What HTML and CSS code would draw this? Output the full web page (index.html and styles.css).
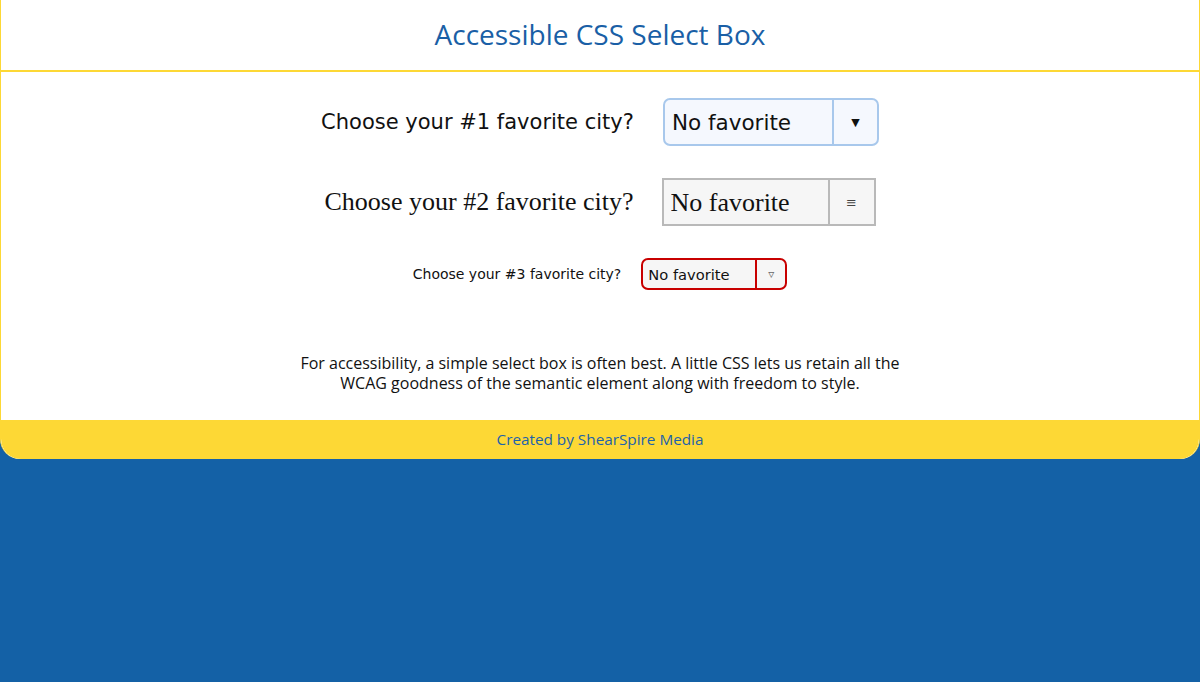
FILE: index.html
```html
<!DOCTYPE html>
<html lang="en">
<head>
<meta charset="utf-8">
<title>Accessible CSS Select Box</title>
<link rel="stylesheet" href="styles.css">
</head>
<body>
<div class="page">
  <header class="masthead">
    <h1 class="title">Accessible CSS Select Box</h1>
  </header>
  <main class="content">
    <div class="row row-1">
      <label class="label label-1" for="city1">Choose your #1 favorite city?</label>
      <div class="pick pick-1">
        <select id="city1" class="pick-select">
          <option>No favorite</option>
          <option>Amsterdam</option>
          <option>Buenos Aires</option>
          <option>Cape Town</option>
        </select>
        <span class="pick-arrow" aria-hidden="true">▼</span>
      </div>
    </div>
    <div class="row row-2">
      <label class="label label-2" for="city2">Choose your #2 favorite city?</label>
      <div class="pick pick-2">
        <select id="city2" class="pick-select">
          <option>No favorite</option>
          <option>Amsterdam</option>
          <option>Buenos Aires</option>
          <option>Cape Town</option>
        </select>
        <span class="pick-arrow" aria-hidden="true">≡</span>
      </div>
    </div>
    <div class="row row-3">
      <label class="label label-3" for="city3">Choose your #3 favorite city?</label>
      <div class="pick pick-3">
        <select id="city3" class="pick-select">
          <option>No favorite</option>
          <option>Amsterdam</option>
          <option>Buenos Aires</option>
          <option>Cape Town</option>
        </select>
        <span class="pick-arrow" aria-hidden="true">▿</span>
      </div>
    </div>
    <p class="note">For accessibility, a simple select box is often best. A little CSS lets us retain all the<br>WCAG goodness of the semantic element along with freedom to style.</p>
  </main>
  <footer class="foot">
    <a class="foot-link" href="#">Created by ShearSpire Media</a>
  </footer>
</div>
</body>
</html>
```
FILE: styles.css
```css
html, body {
  margin: 0;
  padding: 0;
}

body {
  background: #1461a6;
  min-height: 682px;
  font-family: "Open Sans", "DejaVu Sans", sans-serif;
}

.page {
  background: #fff;
  border-left: 1px solid #fdd835;
  border-right: 1px solid #fdd835;
  border-radius: 0 0 20px 20px;
  overflow: hidden;
}

.masthead {
  height: 70px;
  border-bottom: 2px solid #fdd835;
  display: flex;
  align-items: center;
  justify-content: center;
}

.title {
  margin: 0 0 2px;
  font-family: "Open Sans", sans-serif;
  font-weight: 400;
  font-size: 28px;
  color: #1a5fa6;
}

.content {
  padding: 26px 0 0;
  display: flex;
  flex-direction: column;
  align-items: center;
}

.row {
  display: flex;
  align-items: center;
  justify-content: center;
  margin-bottom: 32px;
}

.row-1 { gap: 29px; }
.row-2 { gap: 28px; }
.row-3 { gap: 20px; }

.label-1 {
  font-family: "DejaVu Sans", sans-serif;
  font-size: 21px;
  color: #111;
}

.label-2 {
  font-family: "Liberation Serif", serif;
  font-size: 26px;
  color: #111;
}

.label-3 {
  font-family: "DejaVu Sans", sans-serif;
  font-size: 14px;
  color: #111;
}

.pick {
  display: flex;
  align-items: stretch;
  box-sizing: border-box;
  border-style: solid;
  border-width: 2px;
}

.pick-select {
  appearance: none;
  -webkit-appearance: none;
  border: 0;
  margin: 0;
  outline: none;
  background: transparent;
  color: #111;
  flex: 1;
  min-width: 0;
}

.pick-arrow {
  display: flex;
  align-items: center;
  justify-content: center;
  border-left-style: solid;
  border-left-width: 2px;
}

.pick-1 {
  width: 216px;
  height: 48px;
  border-color: #a8c8ec;
  border-radius: 7px;
  background: #f5f8fe;
}
.pick-1 .pick-select {
  font-family: "DejaVu Sans", sans-serif;
  font-size: 21.5px;
  padding: 0 0 0 7px;
}
.pick-1 .pick-arrow {
  width: 43px;
  border-left-color: #a8c8ec;
  font-size: 11px;
  color: #111;
  font-family: "DejaVu Sans", sans-serif;
}

.pick-2 {
  width: 214px;
  height: 48px;
  border-color: #b9b9b9;
  background: #f6f6f6;
}
.pick-2 .pick-select {
  font-family: "Liberation Serif", serif;
  font-size: 26px;
  padding: 0 0 0 7px;
}
.pick-2 .pick-arrow {
  width: 44px;
  border-left-color: #b9b9b9;
  font-size: 13px;
  color: #444;
  font-family: "DejaVu Sans", sans-serif;
}

.pick-3 {
  width: 146px;
  height: 32px;
  border-color: #c80000;
  border-radius: 7px;
  background: #f6f6f6;
}
.pick-3 .pick-select {
  font-family: "DejaVu Sans", sans-serif;
  font-size: 14.7px;
  padding: 0 0 0 5px;
}
.pick-3 .pick-arrow {
  width: 28px;
  border-left-color: #c80000;
  font-size: 12px;
  color: #666;
  font-family: "DejaVu Sans", sans-serif;
}

.note {
  margin: 31px 0 27px;
  text-align: center;
  font-family: "Open Sans", sans-serif;
  font-size: 16px;
  line-height: 20px;
  color: #111;
}

.foot {
  background: #fdd835;
  height: 39px;
  box-sizing: border-box;
  padding-bottom: 2px;
  display: flex;
  align-items: center;
  justify-content: center;
  border-radius: 0 0 20px 20px;
}

.foot-link {
  font-family: "Open Sans", sans-serif;
  font-size: 15.3px;
  color: #1c62ab;
  text-decoration: none;
}
```
